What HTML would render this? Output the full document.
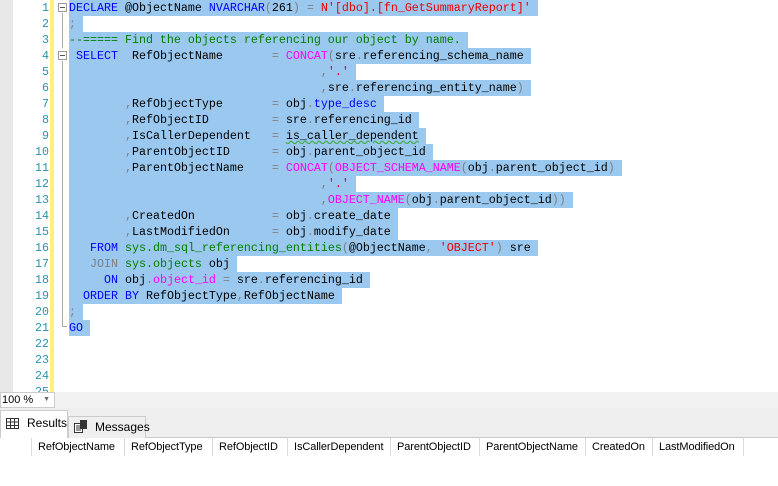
<!DOCTYPE html>
<html><head><style>
*{margin:0;padding:0;box-sizing:border-box}
body{width:778px;height:486px;overflow:hidden;background:#fff;position:relative;font-family:"Liberation Sans",sans-serif}
#gut{position:absolute;left:0;top:0;width:13px;height:392px;background:#e8e8e8}
#nums{position:absolute;left:13px;top:0;width:36px;height:392px;overflow:hidden;font-family:"Liberation Mono",monospace;font-size:11.67px;line-height:16px;color:#2b91af;text-align:right}
#ybar{position:absolute;left:50px;top:0;width:4px;height:392px;background:#fff07a}
#code{position:absolute;left:69px;top:0;font-family:"Liberation Mono",monospace;font-size:11.67px;line-height:16px;color:#000}
#code div{height:16px;white-space:pre}
#code span.s{background:#9bc8ee;display:inline-block;height:16px}
.k{color:#0000ff}.r{color:#e00}.g{color:#008000}.m{color:#ff00ff}.o{color:#808080}
.box{position:absolute;left:58px;width:9px;height:9px;border:1px solid #999;background:#fff}
.box:after{content:"";position:absolute;left:1px;top:3px;width:5px;height:1px;background:#555}
.vl{position:absolute;left:62px;width:1px;background:#aaa}
#zoom{position:absolute;left:0;top:392px;width:778px;height:16px;background:#f2f2f2}
#zsel{position:absolute;left:0;top:392px;width:55px;height:16px;background:#fff;border:1px solid #ccc;font-size:11px;line-height:14px;padding-left:1px}
#tabs{position:absolute;left:0;top:408px;width:778px;height:30px;background:#efefef;border-bottom:1px solid #c8c8c8}
.tab{position:absolute;font-size:12px;line-height:22px}
#grid{position:absolute;left:0;top:438px;width:778px;height:48px;background:#fff}
.h{position:absolute;top:0;height:18px;font-size:11px;line-height:18px;padding-left:6px;border-right:1px solid #ddd;color:#000;white-space:nowrap;letter-spacing:-0.1px}
</style></head><body>
<div id="gut"></div>
<div id="nums">1<br>2<br>3<br>4<br>5<br>6<br>7<br>8<br>9<br>10<br>11<br>12<br>13<br>14<br>15<br>16<br>17<br>18<br>19<br>20<br>21<br>22<br>23<br>24<br>25</div>
<div id="ybar"></div>
<div class="box" style="top:3px"></div>
<div class="vl" style="top:13px;height:35px"></div>
<div class="box" style="top:51px"></div>
<div class="vl" style="top:61px;height:266px"></div>
<div style="position:absolute;left:62px;top:326px;width:5px;height:1px;background:#aaa"></div>
<div id="code"><div><span class="s"><span class="k">DECLARE</span> @ObjectName <span class="k">NVARCHAR</span><span class="o">(</span>261<span class="o">)</span> <span class="o">=</span> <span class="r">N'[dbo].[fn_GetSummaryReport]'</span> </span></div><div><span class="s"><span class="o">;</span> </span></div><div><span class="s"><span class="g">--===== Find the objects referencing our object by name.</span> </span></div><div><span class="s"> <span class="k">SELECT</span>  RefObjectName       <span class="o">=</span> <span class="m">CONCAT</span><span class="o">(</span>sre<span class="o">.</span>referencing_schema_name </span></div><div><span class="s">                                    <span class="o">,</span><span class="r">'.'</span> </span></div><div><span class="s">                                    <span class="o">,</span>sre<span class="o">.</span>referencing_entity_name<span class="o">)</span> </span></div><div><span class="s">        <span class="o">,</span>RefObjectType       <span class="o">=</span> obj<span class="o">.</span><span class="k">type_desc</span> </span></div><div><span class="s">        <span class="o">,</span>RefObjectID         <span class="o">=</span> sre<span class="o">.</span>referencing_id </span></div><div><span class="s">        <span class="o">,</span>IsCallerDependent   <span class="o">=</span> <span style="text-decoration:underline wavy #4a4">is_caller_dependent</span> </span></div><div><span class="s">        <span class="o">,</span>ParentObjectID      <span class="o">=</span> obj<span class="o">.</span>parent_object_id </span></div><div><span class="s">        <span class="o">,</span>ParentObjectName    <span class="o">=</span> <span class="m">CONCAT</span><span class="o">(</span><span class="m">OBJECT_SCHEMA_NAME</span><span class="o">(</span>obj<span class="o">.</span>parent_object_id<span class="o">)</span> </span></div><div><span class="s">                                    <span class="o">,</span><span class="r">'.'</span> </span></div><div><span class="s">                                    <span class="o">,</span><span class="m">OBJECT_NAME</span><span class="o">(</span>obj<span class="o">.</span>parent_object_id<span class="o">))</span> </span></div><div><span class="s">        <span class="o">,</span>CreatedOn           <span class="o">=</span> obj<span class="o">.</span>create_date </span></div><div><span class="s">        <span class="o">,</span>LastModifiedOn      <span class="o">=</span> obj<span class="o">.</span>modify_date </span></div><div><span class="s">   <span class="k">FROM</span> <span class="g">sys.dm_sql_referencing_entities</span><span class="o">(</span>@ObjectName<span class="o">,</span> <span class="r">'OBJECT'</span><span class="o">)</span> sre </span></div><div><span class="s">   <span class="o">JOIN</span> <span class="g">sys.objects</span> obj </span></div><div><span class="s">     <span class="k">ON</span> obj<span class="o">.</span><span class="m">object_id</span> <span class="o">=</span> sre<span class="o">.</span>referencing_id </span></div><div><span class="s">  <span class="k">ORDER BY</span> RefObjectType<span class="o">,</span>RefObjectName </span></div><div><span class="s"><span class="o">;</span> </span></div><div><span class="s"><span class="k">GO</span> </span></div></div>
<div id="zoom"></div>
<div id="zsel">100 %<span style="position:absolute;right:4px;top:0;font-size:7px;color:#666">▼</span></div>
<div id="tabs">
<div style="position:absolute;left:0;top:2px;width:68px;height:29px;background:#fff;border:1px solid #ccc;border-bottom:none"></div>
<svg style="position:absolute;left:6px;top:10px" width="13" height="11"><rect x="0.5" y="0.5" width="12" height="10" fill="#fff" stroke="#333"/><path d="M0 4h13M0 7.5h13M4.5 0v11M8.5 0v11" stroke="#333"/></svg>
<div class="tab" style="left:27px;top:4px">Results</div>
<div style="position:absolute;left:68px;top:8px;width:78px;height:22px;border:1px solid #ccc;border-bottom:none;background:#efefef"></div>
<svg style="position:absolute;left:74px;top:12px" width="14" height="13"><rect x="0.5" y="3.5" width="8" height="9" fill="#fff" stroke="#333"/><rect x="6" y="0" width="7" height="9" fill="#333"/><path d="M2 6h5M2 8h5M2 10h5" stroke="#333"/></svg>
<div class="tab" style="left:95px;top:8px">Messages</div>
</div>
<div id="grid">
<div class="h" style="left:0;width:32px"></div>
<div class="h" style="left:32px;width:93px">RefObjectName</div>
<div class="h" style="left:125px;width:88px">RefObjectType</div>
<div class="h" style="left:213px;width:75px">RefObjectID</div>
<div class="h" style="left:288px;width:103px">IsCallerDependent</div>
<div class="h" style="left:391px;width:89px">ParentObjectID</div>
<div class="h" style="left:480px;width:106px">ParentObjectName</div>
<div class="h" style="left:586px;width:67px">CreatedOn</div>
<div class="h" style="left:653px;width:91px">LastModifiedOn</div>
</div>
</body></html>
